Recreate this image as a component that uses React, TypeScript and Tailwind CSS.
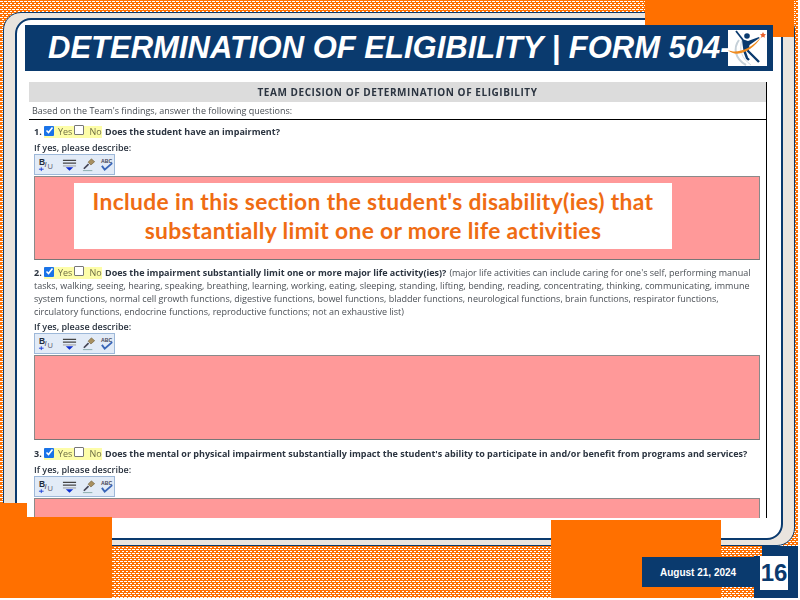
const sans = "font-['Open_Sans',sans-serif]";

function Toolbar() {
  return (
    <div className="w-[81px] h-[21px] bg-[#e2ebf7] border border-[#9db8d9] flex items-center gap-[4px] pl-[3px]">
      <svg width="18" height="17" viewBox="0 0 18 17">
        <text x="1" y="9" fontSize="9" fontWeight="700" fontFamily="Liberation Sans" fill="#1f2a3a">B</text>
        <text x="7" y="11" fontSize="8" fontStyle="italic" fontFamily="Liberation Sans" fill="#445">I</text>
        <text x="10" y="13" fontSize="8" fontFamily="Liberation Sans" fill="#667">U</text>
        <path d="M1 13.5h5M3.5 11.5v4" stroke="#1c3fd6" strokeWidth="1" />
      </svg>
      <svg width="17" height="14" viewBox="0 0 17 14" className="ml-[3px]">
        <path d="M1 2h14M1 5h14" stroke="#444" strokeWidth="1.3" />
        <path d="M1 8h14" stroke="#999" />
        <path d="M4 9.5h8l-4 3.5z" fill="#1030d0" />
      </svg>
      <svg width="15" height="15" viewBox="0 0 15 15">
        <path d="M10 1.5l3.5 3-4 3.5-3-3z" fill="#a89060" stroke="#6b5a35" strokeWidth="0.6" />
        <path d="M7 7L2 12" stroke="#445" strokeWidth="1.8" />
        <path d="M1 14h10" stroke="#8aa" strokeWidth="1" />
      </svg>
      <svg width="15" height="15" viewBox="0 0 15 15">
        <text x="1" y="6" fontSize="5.5" fontWeight="700" fontFamily="Liberation Sans" fill="#445">ABC</text>
        <path d="M2 9l3 4 8-7" fill="none" stroke="#3a66b8" strokeWidth="2" />
      </svg>
    </div>
  );
}

function Check({ on }: { on?: boolean }) {
  return on ? (
    <span className="inline-flex w-[10px] h-[10px] bg-[#1a73e8] rounded-[1px] items-center justify-center">
      <svg width="9" height="9" viewBox="0 0 9 9">
        <path d="M1.5 4.5l2 2 4-5" fill="none" stroke="#fff" strokeWidth="1.6" />
      </svg>
    </span>
  ) : (
    <span className="inline-block w-[10px] h-[10px] bg-white border border-[#777] rounded-[1px]" />
  );
}

function YesNo({ n }: { n: string }) {
  return (
    <div className="flex items-center h-[13px] text-[9px] leading-[13px] text-[#2b3440] whitespace-nowrap">
      <b className="w-[10px] blur-[0.3px]">{n}</b>
      <span className="flex items-center h-[12px] bg-[#fdfda8] text-[#6f6f45] w-[58px]">
        <span className="-mt-[2px] flex"><Check on /></span>
        <span className="ml-[4px] blur-[0.3px]">Yes</span>
        <span className="ml-[2px] -mt-[3px] flex"><Check /></span>
        <span className="ml-[5px] blur-[0.3px]">No</span>
      </span>
    </div>
  );
}

function Box({ h, children }: { h: string; children?: React.ReactNode }) {
  return (
    <div className={`${h} w-[726px] bg-[#ff9999] border border-[#8a8a8a] border-b-[#777] relative`}>
      {children}
    </div>
  );
}

export default function App() {
  return (
    <div className="relative w-[798px] h-[598px] overflow-hidden bg-[#ff7000] bg-[radial-gradient(1.4px_0.8px_at_1.5px_1.5px,#ffffff_99%,transparent_100%),radial-gradient(1.4px_0.8px_at_3.5px_3.5px,#ffffff_99%,transparent_100%)] bg-[length:4px_4px]">
      {/* beige frame */}
      <div className="absolute left-[3px] top-[12px] w-[792px] h-[534px] bg-[#e9e4de] rounded-[18px] border border-[#0a3a6e]">
        <div className="absolute left-[11px] top-[5px] w-[768px] h-[522px] bg-white rounded-[16px] border-2 border-[#0a3a6e]" />
      </div>

      <div className="absolute left-[645px] top-0 w-[149px] h-[37px] bg-[#ff7000]" />

      {/* title bar */}
      <div className="absolute left-[25px] top-[25px] w-[748px] h-[46px] bg-[#0a3a6e] flex items-center pl-[23px] pb-[2px]">
        <h1 className="font-['Liberation_Sans',sans-serif] italic font-bold text-white text-[31px] leading-none whitespace-nowrap">
          DETERMINATION OF ELIGIBILITY | FORM 504-
        </h1>
      </div>
      <div className="absolute left-[728px] top-[30px] w-[39px] h-[36px] bg-white">
        <svg width="39" height="36" viewBox="0 0 39 36">
          <path d="M11 10c-6 8-4 19 7 25" fill="none" stroke="#c5d0d8" strokeWidth="2" />
          <path d="M14 10c-3 9-1 18 9 25" fill="none" stroke="#d4dce2" strokeWidth="1" />
          <circle cx="19" cy="6" r="2.8" fill="#0a3a6e" />
          <path d="M8 1l7 9" fill="none" stroke="#0a3a6e" strokeWidth="1.8" />
          <path d="M14 9l6 2 11-4 .5 1-10 7-1 6-5 0-1-7z" fill="#0a3a6e" />
          <path d="M16 20l3 8 2 2" fill="none" stroke="#0a3a6e" strokeWidth="2.4" />
          <path d="M19 20l5 5 7 7" fill="none" stroke="#0a3a6e" strokeWidth="2.4" />
          <path d="M0 20C8 24 22 20 33 7 26 20 9 29 0 20z" fill="#f08a1c" />
          <path d="M35 2l1 2 2 .3-1.5 1.5.3 2-1.8-1-2 1 .5-2-1.5-1.5 2-.3z" fill="#e8602a" />
        </svg>
      </div>

      {/* form */}
      <div className={`absolute left-[29px] top-[82px] w-[738px] h-[436px] overflow-hidden border-r border-black ${sans}`}>
        <div className="h-[20px] bg-[#dcdcdc] flex items-center justify-center text-[10px] font-bold text-[#2b3440] tracking-[0.55px]">
          <span className="blur-[0.3px]">TEAM DECISION OF DETERMINATION OF ELIGIBILITY</span>
        </div>
        <div className="h-[18px] pl-[3px] text-[9px] leading-[18px] text-[#4a4f55] border-b border-black">
          <span className="blur-[0.3px] inline-block">Based on the Team's findings, answer the following questions:</span>
        </div>

        <div className="pl-[5px] pt-[5px]">
          <div className="flex items-center gap-[3px]">
            <YesNo n="1." />
            <span className="text-[9px] font-bold text-[#2b3440] leading-[13px] blur-[0.3px]">Does the student have an impairment?</span>
          </div>
          <div className="text-[9px] font-semibold text-[#2b3440] leading-[12px] mt-[4px] blur-[0.3px]">If yes, please describe:</div>
          <Toolbar />
          <Box h="h-[84px] mt-[1px]">
            <div className="ml-[39px] mt-[6px] w-[598px] h-[66px] bg-white flex items-center justify-center text-center font-['Lato',sans-serif] text-[#ef6c13] font-bold text-[22.8px] leading-[29px] tracking-[0.36px]">
              <span>Include in this section the student's disability(ies) that<br />substantially limit one or more life activities</span>
            </div>
          </Box>

          <div className="mt-[6px] text-[9px] leading-[13px] text-[#4a4f55] w-[722px]">
            <div className="flex items-center gap-[3px]">
              <YesNo n="2." />
              <span className="font-bold text-[#2b3440] whitespace-nowrap blur-[0.3px]">Does the impairment substantially limit one or more major life activity(ies)?</span>
              <span className="whitespace-nowrap blur-[0.3px]">(major life activities can include caring for one's self, performing manual</span>
            </div>
            <div className="whitespace-nowrap blur-[0.3px]">tasks, walking, seeing, hearing, speaking, breathing, learning, working, eating, sleeping, standing, lifting, bending, reading, concentrating, thinking, communicating, immune</div>
            <div className="whitespace-nowrap blur-[0.3px]">system functions, normal cell growth functions, digestive functions, bowel functions, bladder functions, neurological functions, brain functions, respirator functions,</div>
            <div className="whitespace-nowrap blur-[0.3px]">circulatory functions, endocrine functions, reproductive functions; not an exhaustive list)</div>
          </div>
          <div className="text-[9px] font-semibold text-[#2b3440] leading-[12px] mt-[3px] blur-[0.3px]">If yes, please describe:</div>
          <Toolbar />
          <Box h="h-[85px] mt-[1px]" />

          <div className="mt-[7px] flex items-center gap-[3px]">
            <YesNo n="3." />
            <span className="text-[9px] font-bold text-[#2b3440] leading-[13px] whitespace-nowrap blur-[0.3px]">Does the mental or physical impairment substantially impact the student's ability to participate in and/or benefit from programs and services?</span>
          </div>
          <div className="text-[9px] font-semibold text-[#2b3440] leading-[12px] mt-[4px] blur-[0.3px]">If yes, please describe:</div>
          <Toolbar />
          <Box h="h-[60px] mt-[1px]" />
        </div>
      </div>

      {/* overlays */}
      <div className="absolute left-0 top-[503px] w-[27px] h-[20px] bg-[#ff7000]" />
      <div className="absolute left-0 top-[517px] w-[112px] h-[81px] bg-[#ff7000]" />
      <div className="absolute left-[551px] top-[520px] w-[170px] h-[78px] bg-[#ff7000]" />
      <div className="absolute left-[642px] top-[557px] w-[116px] h-[30px] bg-[#0a3a6e] flex items-center pl-[18px] font-['Liberation_Sans',sans-serif] font-bold text-[10px] text-white whitespace-nowrap">
        August 21, 2024
      </div>
      <div className="absolute left-[762px] top-[546px] w-[36px] h-[12px] bg-[#0a3a6e]" />
      <div className="absolute left-[754px] top-[556px] w-[44px] h-[42px] bg-[#0a3a6e]" />
      <div className="absolute left-[760px] top-[556px] w-[28px] h-[34px] bg-white flex items-center justify-center font-['Liberation_Sans',sans-serif] font-bold text-[24px] text-[#0a3a6e] leading-none">
        16
      </div>
    </div>
  );
}
